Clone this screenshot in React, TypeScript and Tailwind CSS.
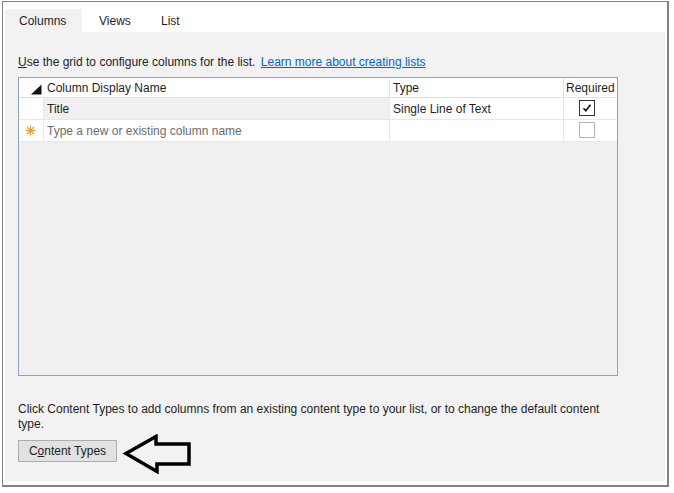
import React from "react";

const font = { fontFamily: '"Liberation Sans", Arial, sans-serif' };

const Asterisk: React.FC = () => (
    <svg width="11" height="11" viewBox="0 0 11 11" className="text-[#e0a23a]">
        <g stroke="currentColor" strokeWidth="1.3" strokeLinecap="round">
            <line x1="5.5" y1="1" x2="5.5" y2="10" />
            <line x1="1" y1="5.5" x2="10" y2="5.5" />
            <line x1="2.3" y1="2.3" x2="8.7" y2="8.7" />
            <line x1="8.7" y1="2.3" x2="2.3" y2="8.7" />
        </g>
    </svg>
);

const Checkbox: React.FC<{ checked?: boolean }> = ({ checked }) => (
    <div
        className={
            "w-[16px] h-[16px] bg-white border flex items-center justify-center " +
            (checked ? "border-[#333333]" : "border-[#b4b4b4]")
        }
    >
        {checked && (
            <svg width="10" height="10" viewBox="0 0 10 10">
                <path d="M1.5 5.2 L3.8 7.8 L8.5 1.8" fill="none" stroke="#111" strokeWidth="1.6" />
            </svg>
        )}
    </div>
);

const App: React.FC = () => {
    return (
        <div className="w-[674px] h-[493px] bg-white text-[12px] text-[#1e1e1e]" style={font}>
            <div className="ml-[2px] mt-[1px] w-[667px] h-[486px] border-l border-t border-r-2 border-b-2 border-[#828282] pl-[2px] pr-[2px] pt-[7px] pb-[4px] flex flex-col">
                {/* tabs */}
                <div className="flex h-[23px] leading-[25px]">
                    <div className="w-[77px] pl-[14px] bg-[#f2f2f2]">Columns</div>
                    <div className="w-[62px] pl-[17px]">Views</div>
                    <div className="pl-[17px] pr-[17px]">List</div>
                </div>

                <div className="flex-1 bg-[#f2f2f2] pl-[13px] pt-[22px]">
                    <div className="h-[16px] leading-[16px]">
                        <span className="underline">U</span>se the grid to configure columns for the list.{" "}
                        <span className="text-[#0066cc] underline ml-[2px]">Learn more about creating lists</span>
                    </div>

                    {/* grid */}
                    <div className="mt-[7px] w-[600px] h-[299px] border border-[#8ea2bf] bg-[#f0f0f0]">
                        <div className="flex h-[20px] bg-white border-b border-[#e2e2e2]">
                            <div className="w-[25px] border-r border-white flex items-end justify-end pr-[1px] pb-[2px]">
                                <svg width="12" height="11" viewBox="0 0 12 11">
                                    <polygon points="11.5,0.5 11.5,10.5 1,10.5" fill="#111" />
                                </svg>
                            </div>
                            <div className="w-[346px] border-r border-[#e2e2e2] pl-[3px] leading-[21px]">Column Display Name</div>
                            <div className="w-[174px] border-r border-[#e2e2e2] pl-[3px] leading-[21px]">Type</div>
                            <div className="flex-1 pl-[2px] leading-[21px]">Required</div>
                        </div>
                        <div className="flex h-[22px] bg-white border-b border-[#e8e8e8]">
                            <div className="w-[25px] border-r border-[#e8e8e8]"></div>
                            <div className="w-[346px] border-r border-[#e8e8e8] bg-[#f0f0f0] pl-[3px] leading-[23px]">Title</div>
                            <div className="w-[174px] border-r border-[#e8e8e8] pl-[3px] leading-[23px]">Single Line of Text</div>
                            <div className="flex-1 pl-[15px] pt-[2px]">
                                <Checkbox checked />
                            </div>
                        </div>
                        <div className="flex h-[22px] bg-white border-b border-[#e8e8e8]">
                            <div className="w-[25px] border-r border-[#e8e8e8] flex items-center justify-center pr-[1px]">
                                <Asterisk />
                            </div>
                            <div className="w-[346px] border-r border-[#e8e8e8] pl-[3px] leading-[23px] text-[#6d6d6d]">
                                Type a new or existing column name
                            </div>
                            <div className="w-[174px] border-r border-[#e8e8e8]"></div>
                            <div className="flex-1 pl-[15px] pt-[2px]">
                                <Checkbox />
                            </div>
                        </div>
                    </div>

                    <p className="mt-[26px] w-[600px] leading-[15px]">
                        Click Content Types to add columns from an existing content type to your list, or to change the default content type.
                    </p>

                    <div className="flex items-start mt-[8px]">
                        <button className="w-[99px] h-[22px] bg-[#e1e1e1] border border-[#adadad] text-[12px] text-[#1e1e1e] leading-[21px]" style={font}>
                            C<span className="underline">o</span>ntent Types
                        </button>
                        <svg width="70" height="40" viewBox="0 0 70 40" className="ml-[6px] -mt-[6px]">
                            <polygon
                                points="3,19.5 33,2.5 33,10 66,10 66,30 34,30 34,37.5"
                                fill="none"
                                stroke="#000"
                                strokeWidth="3.5"
                                strokeLinejoin="miter"
                            />
                        </svg>
                    </div>
                </div>
            </div>
        </div>
    );
};

export default App;
